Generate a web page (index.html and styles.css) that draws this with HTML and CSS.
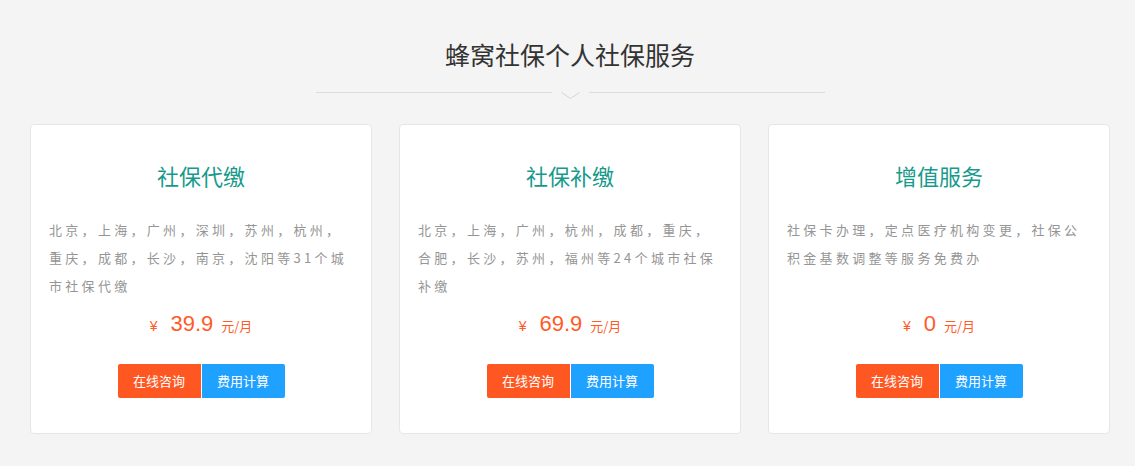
FILE: index.html
```html
<!DOCTYPE html>
<html lang="zh-CN">
<head>
<meta charset="utf-8">
<title>蜂窝社保个人社保服务</title>
<link rel="stylesheet" href="styles.css">
</head>
<body>
<div class="page">
  <div class="head">
    <h1 class="head-title">蜂窝社保个人社保服务</h1>
    <div class="divider">
      <span class="divider-line"></span>
      <svg class="divider-arrow" width="37" height="8" viewBox="0 0 37 8"><path d="M9.5 0.5 L18.5 6.5 L27.5 0.5" fill="none" stroke="#d6d6d6" stroke-width="1"/></svg>
      <span class="divider-line"></span>
    </div>
  </div>
  <div class="cards">
    <div class="card">
      <h2 class="card-title">社保代缴</h2>
      <p class="card-desc">北京，上海，广州，深圳，苏州，杭州，重庆，成都，长沙，南京，沈阳等31个城市社保代缴</p>
      <div class="price"><span class="yen">¥</span><span class="num">39.9</span><span class="unit">元/月</span></div>
      <div class="btns"><a class="btn btn-consult">在线咨询</a><a class="btn btn-calc">费用计算</a></div>
    </div>
    <div class="card">
      <h2 class="card-title">社保补缴</h2>
      <p class="card-desc">北京，上海，广州，杭州，成都，重庆，合肥，长沙，苏州，福州等24个城市社保补缴</p>
      <div class="price"><span class="yen">¥</span><span class="num">69.9</span><span class="unit">元/月</span></div>
      <div class="btns"><a class="btn btn-consult">在线咨询</a><a class="btn btn-calc">费用计算</a></div>
    </div>
    <div class="card">
      <h2 class="card-title">增值服务</h2>
      <p class="card-desc">社保卡办理，定点医疗机构变更，社保公积金基数调整等服务免费办</p>
      <div class="price"><span class="yen">¥</span><span class="num">0</span><span class="unit">元/月</span></div>
      <div class="btns"><a class="btn btn-consult">在线咨询</a><a class="btn btn-calc">费用计算</a></div>
    </div>
  </div>
</div>
</body>
</html>
```
FILE: styles.css
```css
html, body {
  margin: 0;
  padding: 0;
  background: #f4f4f4;
}
body {
  font-family: "Noto Sans CJK SC", "Liberation Sans", sans-serif;
}
.page {
  width: 1080px;
  margin-left: 30px;
}
.head {
  padding-top: 36px;
}
.head-title {
  margin: 0;
  font-size: 25px;
  line-height: 36px;
  font-weight: normal;
  color: #333;
  text-align: center;
}
.divider {
  margin-top: 20px;
  display: flex;
  justify-content: center;
  align-items: flex-start;
  height: 8px;
}
.divider-line {
  width: 236px;
  height: 1px;
  background: #dcdcdc;
}
.divider-arrow {
  display: block;
}
.cards {
  margin-top: 24px;
  display: flex;
  gap: 27px;
}
.card {
  box-sizing: border-box;
  width: 342px;
  background: #fff;
  border: 1px solid #e6e6e6;
  border-radius: 4px;
  padding: 34px 18px 35px;
}
.card-title {
  margin: 0;
  font-size: 22px;
  line-height: 33px;
  font-weight: normal;
  color: #179a8b;
  text-align: center;
}
.card-desc {
  margin: 24px 0 0;
  height: 84px;
  font-size: 13px;
  line-height: 28px;
  letter-spacing: 3.3px;
  color: #959595;
}
.price {
  margin-top: 9px;
  height: 30px;
  display: flex;
  justify-content: center;
  align-items: baseline;
  line-height: 30px;
  color: #ff5a27;
  font-family: "Liberation Sans", "Noto Sans CJK SC", sans-serif;
}
.yen {
  font-size: 14px;
  margin-right: 13px;
}
.num {
  font-size: 22px;
  margin-right: 8px;
}
.unit {
  font-size: 13px;
  font-family: "Noto Sans CJK SC", sans-serif;
}
.btns {
  margin-top: 25px;
  display: flex;
  justify-content: center;
  gap: 1px;
}
.btn {
  display: block;
  width: 83px;
  height: 34px;
  line-height: 34px;
  text-align: center;
  color: #fff;
  font-size: 13px;
}
.btn-consult {
  background: #ff5722;
  border-radius: 2px 0 0 2px;
}
.btn-calc {
  background: #1fa1ff;
  border-radius: 0 2px 2px 0;
}
```
